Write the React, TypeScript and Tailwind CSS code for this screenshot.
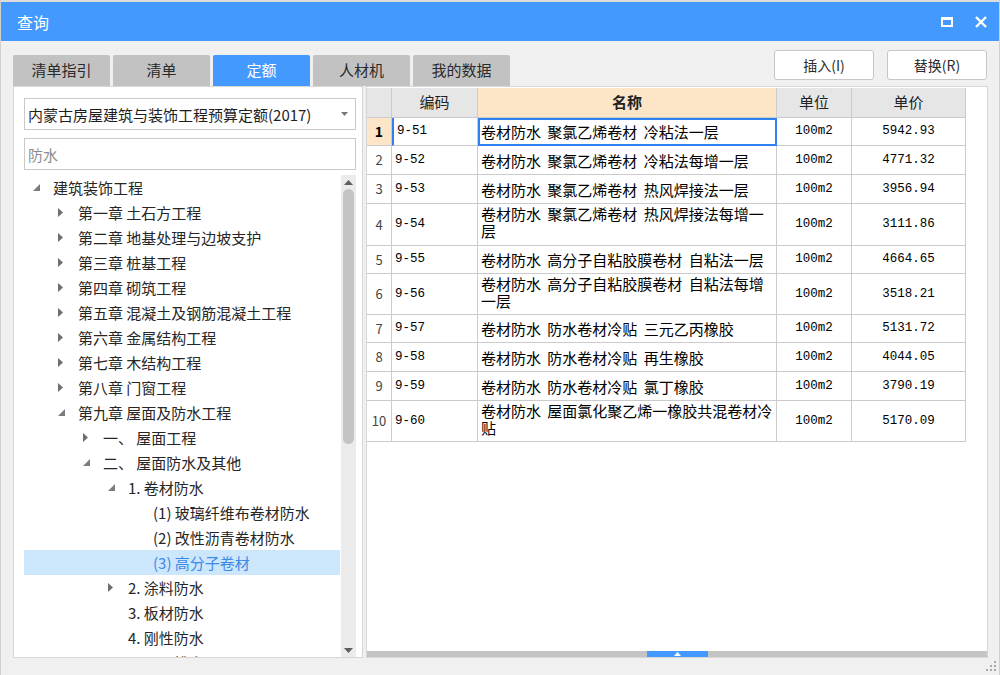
import React from 'react';

type TreeNode = {
  label: string;
  level: number;
  state?: 'open' | 'closed';
  selected?: boolean;
};

const tree: TreeNode[] = [
  { label: '建筑装饰工程', level: 0, state: 'open' },
  { label: '第一章 土石方工程', level: 1, state: 'closed' },
  { label: '第二章 地基处理与边坡支护', level: 1, state: 'closed' },
  { label: '第三章 桩基工程', level: 1, state: 'closed' },
  { label: '第四章 砌筑工程', level: 1, state: 'closed' },
  { label: '第五章 混凝土及钢筋混凝土工程', level: 1, state: 'closed' },
  { label: '第六章 金属结构工程', level: 1, state: 'closed' },
  { label: '第七章 木结构工程', level: 1, state: 'closed' },
  { label: '第八章 门窗工程', level: 1, state: 'closed' },
  { label: '第九章 屋面及防水工程', level: 1, state: 'open' },
  { label: '一、 屋面工程', level: 2, state: 'closed' },
  { label: '二、 屋面防水及其他', level: 2, state: 'open' },
  { label: '1. 卷材防水', level: 3, state: 'open' },
  { label: '(1) 玻璃纤维布卷材防水', level: 4 },
  { label: '(2) 改性沥青卷材防水', level: 4 },
  { label: '(3) 高分子卷材', level: 4, selected: true },
  { label: '2. 涂料防水', level: 3, state: 'closed' },
  { label: '3. 板材防水', level: 3 },
  { label: '4. 刚性防水', level: 3 },
  { label: '5. 屋面排水', level: 3 },
];

// indentation per level, written out so tailwind picks them up
const indent = ['pl-[4px]', 'pl-[29px]', 'pl-[54px]', 'pl-[79px]', 'pl-[104px]'];

type Row = {
  no: number;
  code: string;
  name: string[];
  unit: string;
  price: string;
  h: string;
};

const rows: Row[] = [
  { no: 1, code: '9-51', name: ['卷材防水 聚氯乙烯卷材 冷粘法一层'], unit: '100m2', price: '5942.93', h: 'h-[28px]' },
  { no: 2, code: '9-52', name: ['卷材防水 聚氯乙烯卷材 冷粘法每增一层'], unit: '100m2', price: '4771.32', h: 'h-[29px]' },
  { no: 3, code: '9-53', name: ['卷材防水 聚氯乙烯卷材 热风焊接法一层'], unit: '100m2', price: '3956.94', h: 'h-[29px]' },
  { no: 4, code: '9-54', name: ['卷材防水 聚氯乙烯卷材 热风焊接法每增一', '层'], unit: '100m2', price: '3111.86', h: 'h-[42px]' },
  { no: 5, code: '9-55', name: ['卷材防水 高分子自粘胶膜卷材 自粘法一层'], unit: '100m2', price: '4664.65', h: 'h-[28px]' },
  { no: 6, code: '9-56', name: ['卷材防水 高分子自粘胶膜卷材 自粘法每增', '一层'], unit: '100m2', price: '3518.21', h: 'h-[41px]' },
  { no: 7, code: '9-57', name: ['卷材防水 防水卷材冷贴 三元乙丙橡胶'], unit: '100m2', price: '5131.72', h: 'h-[28px]' },
  { no: 8, code: '9-58', name: ['卷材防水 防水卷材冷贴 再生橡胶'], unit: '100m2', price: '4044.05', h: 'h-[29px]' },
  { no: 9, code: '9-59', name: ['卷材防水 防水卷材冷贴 氯丁橡胶'], unit: '100m2', price: '3790.19', h: 'h-[29px]' },
  { no: 10, code: '9-60', name: ['卷材防水 屋面氯化聚乙烯一橡胶共混卷材冷', '贴'], unit: '100m2', price: '5170.09', h: 'h-[41px]' },
];

const tabs = ['清单指引', '清单', '定额', '人材机', '我的数据'];

function Arrow({ state }: { state?: 'open' | 'closed' }) {
  if (state === 'closed') {
    return (
      <svg width="6" height="9" viewBox="0 0 6 9">
        <polygon points="0,0 5,4.5 0,9" fill="#6e6e6e" />
      </svg>
    );
  }
  if (state === 'open') {
    return (
      <svg width="7" height="7" viewBox="0 0 7 7">
        <polygon points="7,0 7,7 0,7" fill="#7c7c7c" />
      </svg>
    );
  }
  return null;
}

function TreePanel() {
  return (
    <div className="flex w-[350px] flex-col border border-[#d6d6d6] bg-white pl-[10px] pr-[6px] pt-[11px]">
      {/* Quota library select */}
      <div className="flex h-[32px] items-center justify-between border border-[#c9c9c9] pl-[3px] pr-[7px]">
        <span className="text-[15px] leading-none text-[#1e1e1e]">内蒙古房屋建筑与装饰工程预算定额(2017)</span>
        <svg width="7" height="4" viewBox="0 0 7 4">
          <polygon points="0,0 7,0 3.5,4" fill="#777" />
        </svg>
      </div>

      {/* Search */}
      <div className="mt-[8px] flex h-[32px] items-center border border-[#c9c9c9] pl-[3px]">
        <span className="text-[15px] leading-none text-[#8d8d8d]">防水</span>
      </div>

      {/* Tree + scrollbar */}
      <div className="mt-[5px] flex min-h-0 flex-1 overflow-hidden">
        <ul className="w-[316px] overflow-hidden">
          {tree.map((node, i) => (
            <li
              key={i}
              className={`flex h-[25px] items-center ${indent[node.level]} ${node.selected ? 'bg-[#cce6fc]' : ''}`}
            >
              <span className="flex w-[16px] shrink-0 items-center justify-center">
                <Arrow state={node.state} />
              </span>
              <span
                className={`ml-[9px] whitespace-pre text-[15px] leading-none ${
                  node.selected ? 'text-[#3d8ae6]' : 'text-[#262626]'
                }`}
              >
                {node.label}
              </span>
            </li>
          ))}
        </ul>
        <div className="ml-[1px] flex w-[15px] flex-col items-center bg-[#ebebeb]">
          <div className="flex h-[14px] items-center justify-center">
            <svg width="9" height="5" viewBox="0 0 9 5">
              <polygon points="4.5,0 9,5 0,5" fill="#5f5f5f" />
            </svg>
          </div>
          <div className="h-[255px] w-[11px] rounded-full bg-[#c4c4c4]" />
          <div className="flex-1" />
          <div className="flex h-[14px] items-center justify-center">
            <svg width="9" height="5" viewBox="0 0 9 5">
              <polygon points="0,0 9,0 4.5,5" fill="#5f5f5f" />
            </svg>
          </div>
        </div>
      </div>
    </div>
  );
}

const mono = "font-['Liberation_Mono',monospace] text-[12.5px] leading-none text-black";
const cell = 'flex border-r border-b border-[#cbcbcb]';

function QuotaTable() {
  return (
    <div className="flex flex-1 flex-col border border-[#d6d6d6] bg-white">
      <div className="flex-1 pt-[1px]">
        {/* Header */}
        <div className="flex h-[30px]">
          <div className={`${cell} w-[25px] bg-[#e6e6e6]`} />
          <div className={`${cell} w-[86px] items-center justify-center bg-[#e6e6e6] text-[15px] text-[#222]`}>编码</div>
          <div className={`${cell} w-[299px] items-center justify-center bg-[#fde5c8] text-[15px] font-bold text-[#222]`}>名称</div>
          <div className={`${cell} w-[75px] items-center justify-center bg-[#e6e6e6] text-[15px] text-[#222]`}>单位</div>
          <div className={`${cell} w-[114px] items-center justify-center bg-[#e6e6e6] text-[15px] text-[#222]`}>单价</div>
        </div>

        {rows.map((r) => {
          const first = r.no === 1;
          const multi = r.name.length > 1;
          return (
            <div key={r.no} className={`flex ${r.h}`}>
              <div
                className={`${cell} w-[25px] items-center justify-center ${
                  first ? 'bg-[#fde5c8] font-bold text-[14px] text-black' : 'text-[13px] text-[#444]'
                }`}
              >
                {r.no}
              </div>
              <div className={`${cell} w-[86px] items-center pl-[3px] ${first ? 'border-l-2 border-l-[#2f80f0] pl-[2px]' : ''}`}>
                <span className={mono}>{r.code}</span>
              </div>
              <div
                className={`${cell} w-[299px] flex-col pl-[3px] text-[15px] leading-[17px] text-black [word-spacing:3px] ${
                  multi ? 'justify-start pt-[1px]' : 'justify-center'
                } ${first ? 'outline-2 -outline-offset-2 outline-[#2f80f0]' : ''}`}
              >
                {r.name.map((line, i) => (
                  <span key={i} className="whitespace-pre">
                    {line}
                  </span>
                ))}
              </div>
              <div className={`${cell} w-[75px] items-center justify-center`}>
                <span className={mono}>{r.unit}</span>
              </div>
              <div className={`${cell} w-[114px] items-center justify-center`}>
                <span className={mono}>{r.price}</span>
              </div>
            </div>
          );
        })}
      </div>

      {/* collapse bar */}
      <div className="flex h-[6px] justify-center bg-[#c4c4c4]">
        <div className="flex w-[61px] items-center justify-center bg-[#4499ff]">
          <svg width="7" height="4" viewBox="0 0 7 4">
            <polygon points="3.5,0 7,4 0,4" fill="#fff" />
          </svg>
        </div>
      </div>
    </div>
  );
}

export default function App() {
  return (
    <div className="flex h-[675px] w-[1000px] flex-col overflow-hidden border-x border-[#d0d0d0] bg-[#f0f0f0] font-['Noto_Sans_CJK_SC',sans-serif]">
      <div className="h-[2px] bg-[#dcdcdc]" />

      {/* Title bar */}
      <div className="flex h-[39px] items-center justify-between bg-[#4499ff] pl-[16px] pr-[12px]">
        <span className="text-[16px] leading-none text-white">查询</span>
        <div className="flex items-center gap-[22px]">
          <div className="h-[10px] w-[12px] border-2 border-t-[3px] border-white" />
          <svg width="12" height="12" viewBox="0 0 12 12">
            <path d="M1 1 L11 11 M11 1 L1 11" stroke="#fff" strokeWidth="2.4" />
          </svg>
        </div>
      </div>

      {/* Tabs + actions */}
      <div className="mt-[9px] flex h-[36px] justify-between px-[12px]">
        <div className="flex gap-[3px] self-end">
          {tabs.map((t) => (
            <div
              key={t}
              className={`flex h-[31px] w-[97px] items-center justify-center rounded-t-[2px] text-[15px] ${
                t === '定额' ? 'bg-[#4499ff] text-white' : 'bg-[#c2c2c2] text-[#2a2a2a]'
              }`}
            >
              {t}
            </div>
          ))}
        </div>
        <div className="flex gap-[13px] self-start">
          <button className="flex h-[30px] w-[100px] items-center justify-center rounded-[3px] border border-[#c6c6c6] bg-white text-[14px] text-[#2a2a2a]">
            插入(I)
          </button>
          <button className="flex h-[30px] w-[100px] items-center justify-center rounded-[3px] border border-[#c6c6c6] bg-white text-[14px] text-[#2a2a2a]">
            替换(R)
          </button>
        </div>
      </div>

      {/* Panels */}
      <div className="flex h-[572px] gap-[3px] pl-[12px] pr-[11px]">
        <TreePanel />
        <QuotaTable />
      </div>

      {/* Resize grip */}
      <div className="flex flex-1 items-end justify-end pb-[4px] pr-[3px]">
        <svg width="10" height="10" viewBox="0 0 10 10">
          <rect x="8" y="0" width="2" height="2" fill="#a8a8a8" />
          <rect x="4" y="4" width="2" height="2" fill="#a8a8a8" />
          <rect x="8" y="4" width="2" height="2" fill="#a8a8a8" />
          <rect x="0" y="8" width="2" height="2" fill="#a8a8a8" />
          <rect x="4" y="8" width="2" height="2" fill="#a8a8a8" />
          <rect x="8" y="8" width="2" height="2" fill="#a8a8a8" />
        </svg>
      </div>
    </div>
  );
}
